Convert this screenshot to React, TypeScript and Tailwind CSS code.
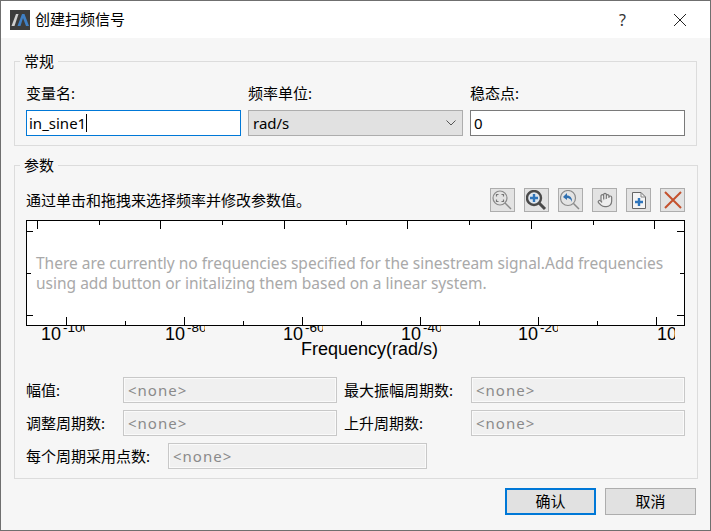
const FONT = "font-['Noto_Sans','Noto_Sans_CJK_SC',sans-serif]";

const bottomMajor = [66, 184, 302, 420, 538, 656];
const bottomMinor = [125, 243, 361, 479, 597];
const topMajor = [37, 160, 284, 407, 531, 654];
const topMinor = [99, 222, 346, 469, 593];

const axisLabels = [
  { x: 41, exp: "-100", w: 44 },
  { x: 165, exp: "-80", w: 40 },
  { x: 283, exp: "-60", w: 40 },
  { x: 401, exp: "-40", w: 40 },
  { x: 518, exp: "-20", w: 40 },
  { x: 657, exp: "", w: 18 },
];

const Group = ({ title, className, children }: { title: string; className: string; children: React.ReactNode }) => (
  <fieldset className={`border border-[#dcdcdc] mx-[13px] px-[11px] ${className}`}>
    <legend className="-ml-[6px] px-[4px] text-[15px] leading-[16px] text-black">{title}</legend>
    {children}
  </fieldset>
);

const ToolButton = ({ children }: { children: React.ReactNode }) => (
  <button className="w-[25px] h-[24px] bg-[#e3e3e3] border border-[#adadad] flex items-center justify-center">
    {children}
  </button>
);

const ReadOnly = ({ className }: { className: string }) => (
  <div className={`h-[26px] border border-[#c8c8c8] bg-[#f0f0f0] outline outline-1 -outline-offset-2 outline-[#fafafa] px-[4px] flex items-center text-[15px] tracking-[1px] text-[#8a8a8a] ${className}`}>
    &lt;none&gt;
  </div>
);

const Chart = () => (
  <div className="relative h-[140px]">
    <svg width="660" height="140" className="block" fontFamily="'Liberation Sans', sans-serif">
      <rect x="0.5" y="0.5" width="658" height="105" fill="#fff" stroke="#000" />
      {topMajor.map((x) => (
        <line key={x} x1={x - 25.5} x2={x - 25.5} y1="1" y2="9" stroke="#000" />
      ))}
      {topMinor.map((x) => (
        <line key={x} x1={x - 25.5} x2={x - 25.5} y1="1" y2="5" stroke="#000" />
      ))}
      {bottomMajor.map((x) => (
        <line key={x} x1={x - 25.5} x2={x - 25.5} y1="97" y2="105" stroke="#000" />
      ))}
      {bottomMinor.map((x) => (
        <line key={x} x1={x - 25.5} x2={x - 25.5} y1="101" y2="105" stroke="#000" />
      ))}
      {[11.5, 95.5].map((y) => (
        <g key={y}>
          <line x1="1" x2="7" y1={y} y2={y} stroke="#000" />
          <line x1="651" x2="658" y1={y} y2={y} stroke="#000" />
        </g>
      ))}
      <line x1="1" x2="5" y1="53.5" y2="53.5" stroke="#000" />
      <line x1="654" x2="658" y1="53.5" y2="53.5" stroke="#000" />
      {axisLabels.map((l) => (
        <svg key={l.x} x={l.x - 26} y="106" width={l.w} height="16" overflow="hidden">
          <text x="0" y="13.5" fontSize="18" fill="#000">10</text>
          {l.exp && <text x="22" y="6" fontSize="13.5" fill="#000">{l.exp}</text>}
        </svg>
      ))}
      <text x="343.5" y="135" textAnchor="middle" fontSize="18" fill="#000">Frequency(rad/s)</text>
    </svg>
    <p className="absolute left-[10px] top-[33px] w-[640px] text-[15.5px] leading-[20px] text-[#a9a9a9]">
      There are currently no frequencies specified for the sinestream signal.Add frequencies using add button or initalizing them based on a linear system.
    </p>
  </div>
);

export default function App() {
  return (
    <div className={`w-[711px] h-[531px] border border-[#6f6f6f] bg-[#f6f6f6] flex flex-col overflow-hidden ${FONT}`}>
      {/* title bar */}
      <div className="h-[37px] bg-white flex items-center pl-[9px] shrink-0">
        <svg width="20" height="20" viewBox="0 0 20 20">
          <rect width="20" height="20" fill="#3c3c3c" />
          <path d="M1.5 16 L6 4 H8.5 L4.5 16Z" fill="#cfcfcf" />
          <path d="M7.5 16 L12 4 H14.5 L19 16 H16 L13 8 L10.5 16Z" fill="#3f7fc4" />
        </svg>
        <span className="ml-[5px] text-[15px] text-black">创建扫频信号</span>
        <span className="ml-auto text-[16px] text-[#333] mr-[47px]">?</span>
        <svg width="14" height="14" viewBox="0 0 14 14" className="mr-[23px]">
          <path d="M1 1 L13 13 M13 1 L1 13" stroke="#222" strokeWidth="1" />
        </svg>
      </div>

      {/* 常规 */}
      <Group title="常规" className="mt-[15px] h-[93px]">
        <div className="flex gap-[7px] pt-[14px]">
          <label className="w-[215px] text-[15px] leading-[20px] text-black">
            变量名:
            <div className="mt-[7px] h-[26px] border border-[#0078d7] bg-white px-[2px] flex items-center text-[15px]">
              in_sine1<span className="w-px h-[18px] bg-black" />
            </div>
          </label>
          <label className="w-[215px] text-[15px] leading-[20px] text-black">
            频率单位:
            <div className="mt-[7px] h-[26px] border border-[#adadad] bg-[#e1e1e1] pl-[4px] pr-[6px] flex items-center justify-between text-[15px]">
              rad/s
              <svg width="10" height="6" viewBox="0 0 10 6" fill="none">
                <path d="M0.5 0.5 L5 5 L9.5 0.5" stroke="#555" strokeWidth="1" />
              </svg>
            </div>
          </label>
          <label className="w-[215px] text-[15px] leading-[20px] text-black">
            稳态点:
            <div className="mt-[7px] h-[26px] border border-[#7a7a7a] bg-white px-[3px] flex items-center text-[15px]">
              0
            </div>
          </label>
        </div>
      </Group>

      {/* 参数 */}
      <Group title="参数" className="mt-[11px] h-[322px]">
        <div className="flex items-center justify-between h-[24px] mt-[15px] mb-[8px]">
          <span className="text-[15px] text-black">通过单击和拖拽来选择频率并修改参数值。</span>
          <div className="flex gap-[9px] mr-[1px]">
            <ToolButton>
              <svg width="21" height="21" viewBox="0 0 21 21" fill="none">
                <circle cx="8" cy="8" r="7" stroke="#8a8a8a" strokeWidth="1.2" />
                <path d="M13 13 L19 19" stroke="#8a8a8a" strokeWidth="1.5" />
                <path d="M4.5 6.5 V4.5 H6.5 M9.5 4.5 H11.5 V6.5 M11.5 9.5 V11.5 H9.5 M6.5 11.5 H4.5 V9.5" stroke="#777" strokeWidth="1.2" />
              </svg>
            </ToolButton>
            <ToolButton>
              <svg width="21" height="21" viewBox="0 0 21 21" fill="none">
                <circle cx="8" cy="8" r="7" stroke="#4a4a4a" strokeWidth="2.4" fill="#dfe6ee" />
                <path d="M13 13 L19 19" stroke="#4a4a4a" strokeWidth="3" />
                <path d="M4 8 H12 M8 4 V12" stroke="#2f75bb" strokeWidth="2.4" />
              </svg>
            </ToolButton>
            <ToolButton>
              <svg width="21" height="21" viewBox="0 0 21 21" fill="none">
                <circle cx="8" cy="8" r="7.5" stroke="#8a8a8a" strokeWidth="1.2" />
                <path d="M13.5 13.5 L19 19" stroke="#8a8a8a" strokeWidth="1.5" />
                <path d="M7 3 L3 7 L7 10 V8 C9 8 11 9 12 12 C12.5 8 10 5.5 7 5.5Z" fill="#2f6fb0" />
              </svg>
            </ToolButton>
            <ToolButton>
              <svg width="16" height="16" viewBox="0 0 24 24" fill="#eee" stroke="#777" strokeWidth="1.8" strokeLinecap="round" strokeLinejoin="round">
                <path d="M18 11V6a2 2 0 0 0-4 0M14 10V4a2 2 0 0 0-4 0v2M10 10.5V6a2 2 0 0 0-4 0v8" />
                <path d="M18 8a2 2 0 1 1 4 0v6a8 8 0 0 1-8 8h-2c-2.8 0-4.5-.86-5.99-2.34l-3.6-3.6a2 2 0 0 1 2.83-2.82L7 15" />
              </svg>
            </ToolButton>
            <ToolButton>
              <svg width="19" height="21" viewBox="0 0 19 21" fill="none">
                <path d="M3.5 2.5 H12 L16.5 7 V18.5 H3.5Z" fill="#f4f4f4" stroke="#666" />
                <path d="M12 2.5 V7 H16.5" stroke="#888" />
                <path d="M6 12 H14 M10 8 V16" stroke="#2f75bb" strokeWidth="2.4" />
              </svg>
            </ToolButton>
            <ToolButton>
              <svg width="20" height="20" viewBox="0 0 20 20" fill="none">
                <path d="M2 2 L18 18 M18 2 L2 18" stroke="#c4512d" strokeWidth="2" />
              </svg>
            </ToolButton>
          </div>
        </div>
        <Chart />
        <div className="mt-[17px] flex flex-col gap-[7px] text-[15px] text-black">
          <div className="flex items-center">
            <span className="w-[97px]">幅值:</span>
            <ReadOnly className="w-[214px]" />
            <span className="w-[127px] ml-[7px]">最大振幅周期数:</span>
            <ReadOnly className="w-[214px]" />
          </div>
          <div className="flex items-center">
            <span className="w-[97px]">调整周期数:</span>
            <ReadOnly className="w-[214px]" />
            <span className="w-[127px] ml-[7px]">上升周期数:</span>
            <ReadOnly className="w-[214px]" />
          </div>
          <div className="flex items-center">
            <span className="w-[142px]">每个周期采用点数:</span>
            <ReadOnly className="w-[259px]" />
          </div>
        </div>
      </Group>

      {/* footer */}
      <div className="flex justify-end gap-[9px] mt-[9px] mr-[14px]">
        <button className="w-[91px] h-[27px] border-2 border-[#0078d7] bg-[#e1e1e1] text-[15px] text-black">确认</button>
        <button className="w-[91px] h-[27px] border border-[#adadad] bg-[#e1e1e1] text-[15px] text-black">取消</button>
      </div>
    </div>
  );
}
